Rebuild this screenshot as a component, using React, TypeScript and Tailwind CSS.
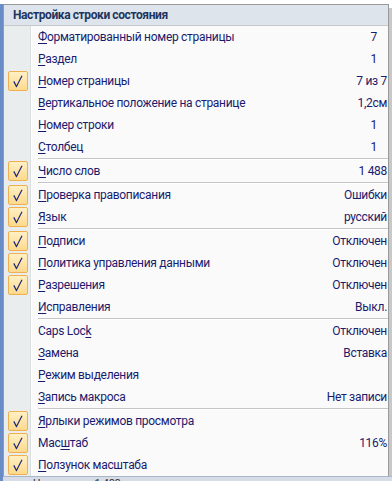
import React from 'react';

type Item = {
  pre: string;
  key: string;
  post: string;
  value?: string;
  checked?: boolean;
  narrow?: boolean;
};

// группы пунктов меню, между группами идёт разделитель
const groups: Item[][] = [
  [
    { pre: '', key: 'Ф', post: 'орматированный номер страницы', value: '7', narrow: true },
    { pre: '', key: 'Р', post: 'аздел', value: '1', narrow: true },
    { pre: '', key: 'Н', post: 'омер страницы', value: '7 из 7', checked: true },
    { pre: '', key: 'В', post: 'ертикальное положение на странице', value: '1,2см' },
    { pre: '', key: 'Н', post: 'омер строки', value: '1', narrow: true },
    { pre: '', key: 'С', post: 'толбец', value: '1', narrow: true },
  ],
  [{ pre: '', key: 'Ч', post: 'исло слов', value: '1 488', checked: true }],
  [
    { pre: '', key: 'П', post: 'роверка правописания', value: 'Ошибки', checked: true },
    { pre: '', key: 'Я', post: 'зык', value: 'русский', checked: true },
  ],
  [
    { pre: '', key: 'П', post: 'одписи', value: 'Отключен', checked: true },
    { pre: '', key: 'П', post: 'олитика управления данными', value: 'Отключен', checked: true },
    { pre: '', key: 'Р', post: 'азрешения', value: 'Отключен', checked: true },
    { pre: '', key: 'И', post: 'справления', value: 'Выкл.' },
  ],
  [
    { pre: 'Caps Loc', key: 'k', post: '', value: 'Отключен' },
    { pre: '', key: 'З', post: 'амена', value: 'Вставка' },
    { pre: '', key: 'Р', post: 'ежим выделения' },
    { pre: '', key: 'З', post: 'апись макроса', value: 'Нет записи' },
  ],
  [
    { pre: '', key: 'Я', post: 'рлыки режимов просмотра', checked: true },
    { pre: 'Мас', key: 'ш', post: 'таб', value: '116%', checked: true },
    { pre: '', key: 'П', post: 'олзунок масштаба', checked: true },
  ],
];

const Check = () => (
  <div className="w-[20px] h-[20px] rounded-[2px] border border-[#f0b050] bg-gradient-to-b from-[#fff0c4] to-[#fdd98c] flex items-center justify-center">
    <svg width="18" height="18" viewBox="0 0 18 18">
      <path d="M4.8 9.4 L7.5 14.6 L13 3.8" fill="none" stroke="#1d2a78" strokeWidth="1.2" strokeLinejoin="round" />
    </svg>
  </div>
);

const Row = ({ item }: { item: Item }) => (
  <div className="flex h-[22px] items-center">
    <div className="w-[26px] h-full bg-[#e9edee] flex items-center justify-center shrink-0 pl-[1px]">
      {item.checked && <Check />}
    </div>
    <div className="w-[1px] h-full bg-[#dcdfe0]" />
    <div className="w-[1px] h-full bg-white" />
    <div className="flex-1 flex items-center justify-between pl-[6px] pr-[1px] text-[#1b1b6e]">
      <span>
        {item.pre}
        <span className="underline underline-offset-2">{item.key}</span>
        {item.post}
      </span>
      {item.value && <span className={item.narrow ? 'mr-[10px]' : ''}>{item.value}</span>}
    </div>
  </div>
);

const Separator = () => (
  <div className="flex h-[2px]">
    <div className="w-[26px] bg-[#e9edee]" />
    <div className="w-[1px] bg-[#dcdfe0]" />
    <div className="w-[1px] bg-white" />
    <div className="flex-1 pl-[6px]">
      <div className="h-[1px] bg-[#c5c5c5]" />
      <div className="h-[1px] bg-white" />
    </div>
  </div>
);

export default function App() {
  return (
    <div
      className="w-[392px] h-[481px] overflow-hidden bg-white flex text-[12px] leading-none tracking-[-0.3px]"
      style={{ fontFamily: 'Roboto, "Noto Sans", sans-serif' }}
    >
      <div className="w-[3px] flex flex-col">
        <div className="h-[4px] bg-white" />
        <div className="flex-1 bg-[#6a8cc6]" />
      </div>
      <div className="flex-1 flex flex-col">
        <div className="h-[4px] bg-white" />
        <div className="flex">
          <div className="w-[386px] border border-[#9a9a9a] border-b-0 bg-[#fafafa] flex flex-col">
            <div className="h-[21px] bg-[#dde4ec] border-b border-[#c5c9ce] flex items-center pl-[9px] font-bold text-[#1e3560] tracking-[-0.4px]">
              Настройка строки состояния
            </div>
            {groups.map((g, gi) => (
              <React.Fragment key={gi}>
                {gi > 0 && <Separator />}
                {g.map((item, i) => (
                  <Row key={i} item={item} />
                ))}
              </React.Fragment>
            ))}
          </div>
          <div className="w-[3px] flex flex-col">
            <div className="h-[4px]" />
            <div className="flex-1 bg-[#c8c8c8]" />
          </div>
        </div>
        <div className="flex-1 bg-[#d6dde8] border-t border-[#a9b6c8] flex items-start overflow-hidden">
          <span className="pl-[30px] text-[11px] text-[#333] pt-[1px]">Число слов: 1 488</span>
        </div>
      </div>
    </div>
  );
}
